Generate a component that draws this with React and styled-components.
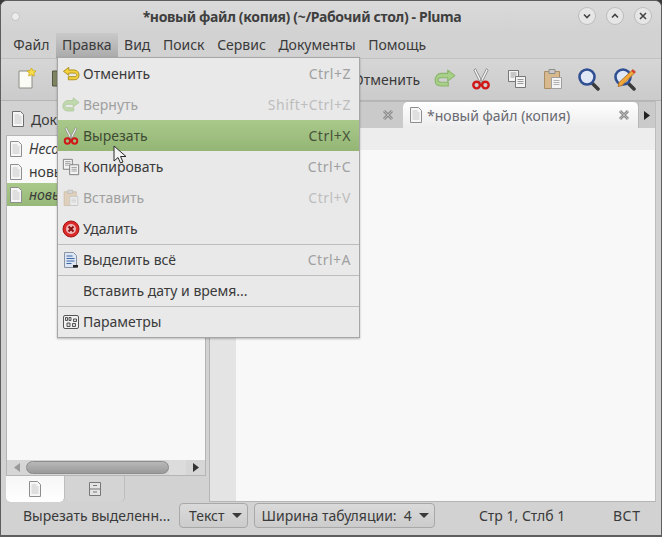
import styled, { createGlobalStyle } from 'styled-components';

const GlobalStyle = createGlobalStyle`
    html, body { margin: 0; padding: 0; background: #3a3a3a; }
    * { box-sizing: border-box; }
`;

const Window = styled.div`
    position: relative;
    width: 662px;
    height: 537px;
    display: flex;
    flex-direction: column;
    overflow: hidden;
    background: #d2d2d2;
    border: 1px solid #5e5e5e;
    border-bottom-width: 2px;
    border-radius: 7px 7px 0 0;
    font-family: "Noto Sans", "Open Sans", sans-serif;
    font-size: 14px;
    color: #3a3a3a;
`;

const TitleBar = styled.header`
    height: 32px;
    flex: none;
    display: flex;
    align-items: center;
    justify-content: space-between;
    padding: 0 10px 2px 10px;
    background: linear-gradient(#dadada, #d2d2d2);
`;

const Title = styled.h1`
    margin: 0 0 0 5px;
    font-size: 14px;
    font-weight: 700;
    letter-spacing: -.34px;
    color: #3f3f3f;
`;

const Lamp = styled.span`
    width: 9px;
    height: 9px;
    border-radius: 50%;
    background: #ececec;
    border: 1px solid #c2c2c2;
`;

const WindowButtons = styled.div`
    display: flex;
    gap: 12px;
`;

const WindowButton = styled.span`
    width: 16px;
    height: 16px;
    border-radius: 50%;
    display: flex;
    align-items: center;
    justify-content: center;
    background: #e6e6e6;
    box-shadow: 0 0 0 1px #bcbcbc;
`;

const MenuBar = styled.nav`
    height: 25px;
    flex: none;
    display: flex;
    padding-left: 6px;
    background: #d2d2d2;
`;

const MenuTitle = styled.span`
    display: flex;
    align-items: center;
    padding: 0 6.3px 2px;
    background: ${({ $open }) => $open ? 'linear-gradient(#c9c9c9, #aaaaaa)' : 'transparent'};
`;

const Toolbar = styled.div`
    height: 43px;
    flex: none;
    display: flex;
    align-items: center;
    padding-left: 8px;
    background: linear-gradient(#d6d6d6, #cbcbcb);
    border-top: 1px solid #c2c2c2;
    border-bottom: 1px solid #b4b4b4;
`;

const ToolButton = styled.span`
    width: 36px;
    height: 36px;
    flex: none;
    display: flex;
    align-items: center;
    justify-content: center;
    padding-bottom: 2px;
    margin-left: ${({ $offset }) => $offset || 0}px;
`;

const ToolLabel = styled.span`
    margin-left: ${({ $offset }) => $offset}px;
    margin-right: 6px;
`;

const Main = styled.main`
    flex: 1;
    min-height: 0;
    display: flex;
`;

const SidePanel = styled.aside`
    width: 208px;
    flex: none;
    display: flex;
    flex-direction: column;
    padding-left: 5px;
    padding-right: 3px;
`;

const PanelHeader = styled.div`
    height: 34px;
    flex: none;
    display: flex;
    align-items: center;
    gap: 6px;
    padding-left: 5px;
    padding-top: 2px;
`;

const DocList = styled.ul`
    flex: 1;
    margin: 0;
    padding: 1px 0 0;
    list-style: none;
    background: #f8f8f8;
    border: 1px solid #b5b5b5;
    border-bottom: 0;
`;

const DocRow = styled.li`
    height: 23px;
    display: flex;
    align-items: center;
    gap: 6px;
    padding-left: 2px;
    white-space: nowrap;
    font-style: ${({ $italic }) => $italic ? 'italic' : 'normal'};
    background: ${({ $selected }) => $selected ? 'linear-gradient(#a9c98a, #96b878)' : 'transparent'};
`;

const ScrollBar = styled.div`
    height: 16px;
    flex: none;
    display: flex;
    align-items: center;
    background: #d6d6d6;
    border: 1px solid #b5b5b5;
    border-width: 0 1px 1px;
`;

const ScrollArrow = styled.span`
    width: 19px;
    flex: none;
    display: flex;
    justify-content: center;
`;

const ScrollThumb = styled.span`
    width: 143px;
    height: 13px;
    border-radius: 7px;
    background: linear-gradient(#b8b8b8, #9a9a9a);
    border: 1px solid #8c8c8c;
`;

const ScrollTrack = styled.span`
    flex: 1;
    height: 15px;
    background: #dcdcdc;
`;

const PanelTabs = styled.div`
    height: 26px;
    flex: none;
    display: flex;
`;

const PanelTab = styled.span`
    width: ${({ $active }) => $active ? 59 : 60}px;
    display: flex;
    align-items: center;
    justify-content: center;
    border-radius: 0 0 5px 5px;
    background: ${({ $active }) => $active ? 'linear-gradient(#f6f6f6, #ffffff)' : '#d4d4d4'};
    border-right: 1px solid #bdbdbd;
`;

const EditorPane = styled.section`
    flex: 1;
    min-width: 0;
    display: flex;
    flex-direction: column;
    border-left: 1px solid #b5b5b5;
    margin-right: 5px;
    border-right: 1px solid #bcbcbc;
    border-bottom: 1px solid #b5b5b5;
`;

const TabStrip = styled.div`
    height: 27px;
    flex: none;
    display: flex;
    align-items: stretch;
    background: #cacaca;
    border-top: 1px solid #b8b8b8;
`;

const TabFiller = styled.span`
    flex: 1;
    display: flex;
    align-items: center;
    justify-content: flex-end;
    padding-right: 9px;
`;

const ActiveTab = styled.span`
    width: 235px;
    flex: none;
    display: flex;
    align-items: center;
    gap: 4px;
    padding: 0 8px 0 6px;
    border-radius: 5px 5px 0 0;
    background: linear-gradient(#ffffff, #ececec);
    color: #6a6a72;
`;

const TabName = styled.span`
    flex: 1;
`;

const TabScroll = styled.span`
    width: 17px;
    flex: none;
    display: flex;
    align-items: center;
    justify-content: center;
    border-left: 1px solid #b8b8b8;
`;

const EditorBody = styled.div`
    flex: 1;
    display: flex;
`;

const Gutter = styled.div`
    width: 26px;
    flex: none;
    background: #e4e4e4;
`;

const TextArea = styled.div`
    flex: 1;
    background: linear-gradient(#ededed 22px, #f8f8f8 22px);
`;

const StatusBar = styled.footer`
    height: 33px;
    flex: none;
    display: flex;
    align-items: flex-start;
    padding-top: 1px;
`;

const StatusText = styled.span`
    width: ${({ $width }) => $width}px;
    flex: none;
    height: 25px;
    display: flex;
    align-items: center;
    margin-left: ${({ $offset }) => $offset || 0}px;
    white-space: nowrap;
    letter-spacing: ${({ $spread }) => $spread || 0}px;
`;

const Combo = styled.span`
    height: 25px;
    flex: none;
    display: flex;
    align-items: center;
    gap: 7px;
    margin-left: ${({ $offset }) => $offset}px;
    padding: 0 5px 0 ${({ $pad }) => $pad}px;
    border: 1px solid #a8a8a8;
    border-radius: 4px;
    background: linear-gradient(#dadada, #cccccc);
    white-space: pre;
`;

const Caret = styled.i`
    width: 0;
    height: 0;
    border-left: 5px solid transparent;
    border-right: 5px solid transparent;
    border-top: 5px solid #3a3a3a;
`;

const Menu = styled.ul`
    position: absolute;
    left: 56px;
    top: 56px;
    width: 303px;
    margin: 0;
    padding: 0;
    list-style: none;
    background: #e9e9e9;
    border: 1px solid #a6a6a6;
    box-shadow: 0 1px 2px rgba(0, 0, 0, .25);
`;

const MenuRow = styled.li`
    height: 31px;
    display: grid;
    grid-template-columns: 25px 1fr auto;
    align-items: center;
    padding: 0 8px ${({ $sep }) => $sep ? 1 : 0}px 0;
    border-top: ${({ $sep }) => $sep ? '1px solid #bdbdbd' : '0'};
    color: ${({ $disabled, $active }) => $disabled ? '#a0a0a0' : $active ? '#3f4b34' : '#3a3a3a'};
    background: ${({ $active }) => $active ? 'linear-gradient(#a9c98a, #94b675)' : 'transparent'};
`;

const RowIcon = styled.span`
    display: flex;
    align-items: center;
    justify-content: center;
`;

const Shortcut = styled.span`
    letter-spacing: .5px;
    color: ${({ $active, $disabled }) => $active ? '#46523a' : $disabled ? '#bdbdbd' : '#a0a0a0'};
`;

const Pointer = styled.svg`
    position: absolute;
    left: 112px;
    top: 144px;
`;

const NewIcon = () => (
    <svg width="24" height="24" viewBox="0 0 24 24">
        <path d="M4 4h13v17H4z" fill="#fbfbf6" stroke="#8c8c84" />
        <path d="M16.500 1l1.500 2.600 3 .4-2.100 2.100.5 3-2.900-1.400-2.800 1.400.5-3L12 4l3-.4z" fill="#f6dc4a" stroke="#c9a91f" strokeWidth=".8" />
    </svg>
);

const SaveIcon = () => (
    <svg width="22" height="22" viewBox="0 0 22 22">
        <path d="M.5 3h6v15h-6z" fill="#7f8462" stroke="#55583f" />
    </svg>
);

const UndoIcon = () => (
    <svg width="18" height="16" viewBox="0 0 20 18">
        <path d="M7.500 1.500L1.500 6l6 4.500V8h6c2 0 3 .8 3 2s-1 2-3 2H7v3.500h6.500c3.600 0 5.500-2.200 5.500-5.200S17 4.500 13.500 4.500h-6z" fill="#f3d23e" stroke="#a88a12" strokeLinejoin="round" />
    </svg>
);

const RedoIcon = ({ faded, size = 18 }) => (
    <svg width={size} height={size * .85} viewBox="0 0 20 17" opacity={faded ? .6 : 1}>
        <path d="M12.500 1l6.500 5-6.500 5V8h-6c-2 0-3 .8-3 2s1 2 3 2H13v3.500H6.500C2.900 15.500 1 13.300 1 10.300S3 4 6.500 4h6z" fill="#a8d088" stroke="#8ab56c" strokeLinejoin="round" />
    </svg>
);

const ScissorsIcon = ({ size = 20 }) => (
    <svg width={size} height={size} viewBox="0 0 20 20">
        <path d="M5 .5l6.200 12-1.800 1.200L3.500 2zM15 .5l-6.200 12 1.800 1.200L16.500 2z" fill="#f0f0f0" stroke="#8a8a8a" strokeWidth=".8" />
        <circle cx="6" cy="15.500" r="3" fill="none" stroke="#d01818" strokeWidth="2.200" />
        <circle cx="14" cy="15.500" r="3" fill="none" stroke="#d01818" strokeWidth="2.200" />
    </svg>
);

const CopyIcon = ({ size = 20 }) => (
    <svg width={size} height={size} viewBox="0 0 20 20">
        <path d="M1.500 1.500h10v11h-10z" fill="#f4f4f4" stroke="#777" />
        <path d="M8.500 7.500h10v11h-10z" fill="#f4f4f4" stroke="#777" />
        <path d="M3.500 4h6M3.500 6h6M3.500 8h4M10.500 10.500h6M10.500 12.500h6M10.500 14.500h6" stroke="#9a9a9a" />
    </svg>
);

const PasteIcon = ({ faded, size = 20 }) => (
    <svg width={size} height={size * 1.1} viewBox="0 0 20 22" opacity={faded ? .5 : 1}>
        <path d="M1.500 3.500h15v17h-15z" fill="#d8b98e" stroke="#a98d67" />
        <path d="M6 1.500h6v4H6z" fill="#c9c9c9" stroke="#8e8e8e" />
        <path d="M8.500 9.500h10v11h-10z" fill="#f4f4f4" stroke="#a0a0a0" />
        <path d="M10.500 12.500h6M10.500 14.500h6M10.500 16.500h6" stroke="#b0b0b0" />
    </svg>
);

const DeleteIcon = () => (
    <svg width="18" height="18" viewBox="0 0 18 18">
        <circle cx="9" cy="9" r="8" fill="#dc2a2a" stroke="#a31414" />
        <circle cx="9" cy="9" r="5" fill="#eeb9b9" />
        <path d="M6.500 6.500l5 5M11.500 6.500l-5 5" stroke="#8c1010" strokeWidth="2" />
    </svg>
);

const SelectAllIcon = () => (
    <svg width="16" height="18" viewBox="0 0 16 18">
        <path d="M1.500 1.500h9l3 3v12h-12z" fill="#dde6f2" stroke="#8a94a3" />
        <path d="M3.500 5h6M3.500 7.500h8M3.500 10h8M3.500 12.500h5" stroke="#3b68a8" />
        <path d="M10 14h5v2.500h-5z" fill="#222" />
    </svg>
);

const PrefsIcon = () => (
    <svg width="16" height="14" viewBox="0 0 16 14">
        <rect x=".5" y=".5" width="15" height="13" rx="1.500" fill="#f1f1f1" stroke="#555" />
        <path d="M2.500 2.500h2v3h-2zM6 2.500h2v3H6zM10.500 4h3v2.500h-3zM4 8h3v3.500H4zM9.500 8.500h3v3h-3z" fill="#dcdcdc" stroke="#333" strokeWidth=".8" />
    </svg>
);

const FindIcon = ({ pencil }) => (
    <svg width="24" height="24" viewBox="0 0 24 24">
        <path d="M14 15l7 7" stroke="#3a3a3a" strokeWidth="3.500" strokeLinecap="round" />
        <circle cx="10" cy="10" r="7.500" fill="#dfe8f4" stroke="#2f4f92" strokeWidth="2.600" />
        {pencil && <path d="M20 2.500l2.500 2.500L9 18.500l-4 1 1-4z" fill="#f0a83a" stroke="#a8661c" strokeWidth=".8" />}
        {pencil && <path d="M20 2.500l2.500 2.500-1.500 1.500L18.500 4z" fill="#d83a3a" />}
    </svg>
);

const DocIcon = ({ dim }) => (
    <svg width="14" height="18" viewBox="0 0 14 18">
        <path d="M1.500 1.500h8l3 3v12h-11z" fill="#f6f6f6" stroke={dim ? '#8e8e8e' : '#6f6f6f'} />
        <path d="M3.500 5h5M3.500 7h7M3.500 9h7M3.500 11h7M3.500 13h7" stroke="#c8c8c8" />
    </svg>
);

const DrawerIcon = () => (
    <svg width="14" height="16" viewBox="0 0 14 16">
        <path d="M1.500 1.500h11v13h-11z" fill="#e4e4e4" stroke="#777" />
        <path d="M1.500 8h11M5 4.500h4M5 11h4" stroke="#777" />
    </svg>
);

const CloseX = () => (
    <svg width="12" height="12" viewBox="0 0 12 12">
        <path d="M2 2l8 8M10 2l-8 8" stroke="#8c8c8c" strokeWidth="3" />
        <path d="M2 2l8 8M10 2l-8 8" stroke="#bcbcbc" strokeWidth="1" />
    </svg>
);

const Triangle = ({ left, color = '#333' }) => (
    <svg width="6" height="9" viewBox="0 0 6 9">
        <path d={left ? 'M6 0v9L0 4.500z' : 'M0 0v9l6-4.500z'} fill={color} />
    </svg>
);

const WmGlyph = ({ d }) => (
    <svg width="10" height="10" viewBox="0 0 10 10">
        <path d={d} fill="none" stroke="#444" strokeWidth="1.600" />
    </svg>
);

const menuTitles = ['Файл', 'Правка', 'Вид', 'Поиск', 'Сервис', 'Документы', 'Помощь'];

const menuRows = [
    { label: 'Отменить', keys: 'Ctrl+Z', icon: <UndoIcon /> },
    { label: 'Вернуть', keys: 'Shift+Ctrl+Z', icon: <RedoIcon faded />, disabled: true, faintKeys: true },
    { label: 'Вырезать', keys: 'Ctrl+X', icon: <ScissorsIcon size={18} />, active: true },
    { label: 'Копировать', keys: 'Ctrl+C', icon: <CopyIcon size={18} /> },
    { label: 'Вставить', keys: 'Ctrl+V', icon: <PasteIcon faded size={16} />, disabled: true, faintKeys: true },
    { label: 'Удалить', icon: <DeleteIcon /> },
    { label: 'Выделить всё', keys: 'Ctrl+A', icon: <SelectAllIcon />, sep: true },
    { label: 'Вставить дату и время...', sep: true },
    { label: 'Параметры', icon: <PrefsIcon />, sep: true },
];

const App = () => (
    <Window>
        <GlobalStyle />
        <TitleBar>
            <Lamp />
            <Title>*новый файл (копия) (~/Рабочий стол) - Pluma</Title>
            <WindowButtons>
                <WindowButton><WmGlyph d="M2 3.500l3 3 3-3" /></WindowButton>
                <WindowButton><WmGlyph d="M2 6.500l3-3 3 3" /></WindowButton>
                <WindowButton><WmGlyph d="M2 2l6 6M8 2L2 8" /></WindowButton>
            </WindowButtons>
        </TitleBar>

        <MenuBar>
            {menuTitles.map((title) => (
                <MenuTitle key={title} $open={title === 'Правка'}>{title}</MenuTitle>
            ))}
        </MenuBar>

        <Toolbar>
            <ToolButton><NewIcon /></ToolButton>
            <ToolButton><SaveIcon /></ToolButton>
            <ToolLabel $offset={272}>Отменить</ToolLabel>
            <ToolButton $offset={1}><RedoIcon size={22} /></ToolButton>
            <ToolButton><ScissorsIcon size={22} /></ToolButton>
            <ToolButton><CopyIcon size={20} /></ToolButton>
            <ToolButton><PasteIcon size={20} /></ToolButton>
            <ToolButton><FindIcon /></ToolButton>
            <ToolButton><FindIcon pencil /></ToolButton>
        </Toolbar>

        <Main>
            <SidePanel>
                <PanelHeader><DocIcon />Документы</PanelHeader>
                <DocList>
                    <DocRow $italic><DocIcon dim />Несохранённый документ</DocRow>
                    <DocRow><DocIcon dim />новый файл</DocRow>
                    <DocRow $italic $selected><DocIcon dim />новый файл (копия)</DocRow>
                </DocList>
                <ScrollBar>
                    <ScrollArrow><Triangle left color="#9a9a9a" /></ScrollArrow>
                    <ScrollThumb />
                    <ScrollTrack />
                    <ScrollArrow><Triangle /></ScrollArrow>
                </ScrollBar>
                <PanelTabs>
                    <PanelTab $active><DocIcon dim /></PanelTab>
                    <PanelTab><DrawerIcon /></PanelTab>
                </PanelTabs>
            </SidePanel>

            <EditorPane>
                <TabStrip>
                    <TabFiller><CloseX /></TabFiller>
                    <ActiveTab>
                        <DocIcon dim />
                        <TabName>*новый файл (копия)</TabName>
                        <CloseX />
                    </ActiveTab>
                    <TabScroll><Triangle color="#222" /></TabScroll>
                </TabStrip>
                <EditorBody>
                    <Gutter />
                    <TextArea />
                </EditorBody>
            </EditorPane>
        </Main>

        <StatusBar>
            <StatusText $width={156} $offset={22}>Вырезать выделенн...</StatusText>
            <Combo $pad={9}>Текст<Caret /></Combo>
            <Combo $pad={7} $offset={6}>{'Ширина табуляции:  4'}<Caret /></Combo>
            <StatusText $width={134} $offset={44}>Стр 1, Стлб 1</StatusText>
            <StatusText $width={40} $spread={.6}>ВСТ</StatusText>
        </StatusBar>

        <Menu>
            {menuRows.map((row) => (
                <MenuRow key={row.label} $sep={row.sep} $active={row.active} $disabled={row.disabled}>
                    <RowIcon>{row.icon}</RowIcon>
                    <span>{row.label}</span>
                    {row.keys && <Shortcut $active={row.active} $disabled={row.faintKeys}>{row.keys}</Shortcut>}
                </MenuRow>
            ))}
        </Menu>

        <Pointer width="14" height="20" viewBox="0 0 14 20">
            <path d="M1 1v15l4-3.500 2.500 5.500 2.500-1-2.500-5.500H13z" fill="#f4f4f4" stroke="#2a2a2a" />
        </Pointer>
    </Window>
);

export default App;
